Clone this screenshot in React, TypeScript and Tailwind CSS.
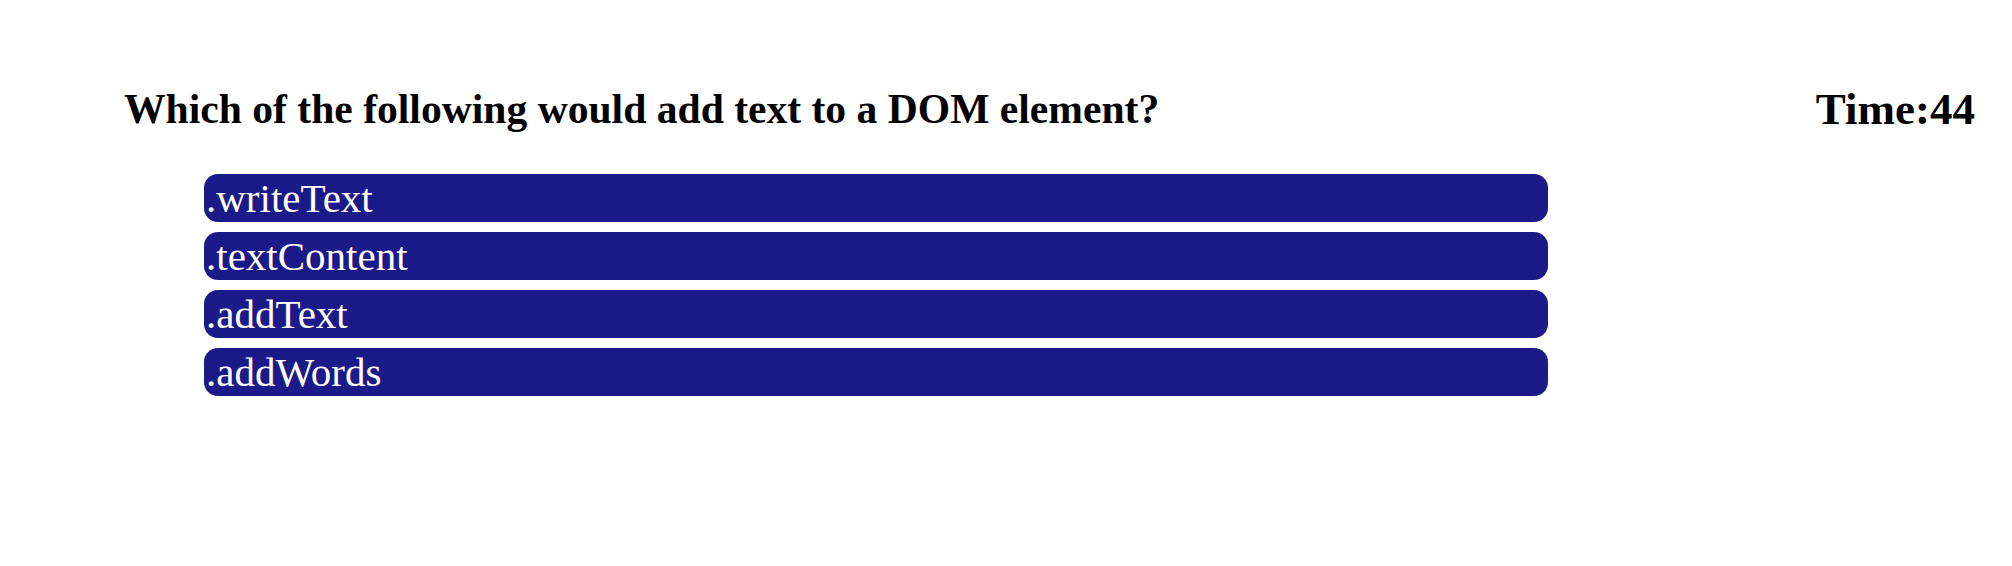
const choices = [".writeText", ".textContent", ".addText", ".addWords"];

const App = () => {
  return (
    <main className="w-full min-h-screen bg-white font-['Liberation_Serif','Times_New_Roman',serif] text-black">
      <div className="flex justify-between items-start pl-[124px] pr-[37px] pt-[84px]">
        <h2 className="text-[41.6px] font-bold leading-[47px] mt-[2px]">
          Which of the following would add text to a DOM element?
        </h2>
        <div className="text-[45px] font-bold leading-[50px]">Time:44</div>
      </div>

      {/* Answer list */}
      <div className="flex flex-col gap-[10px] ml-[204px] mt-[40px] w-[1344px]">
        {choices.map((choice) => (
          <button
            key={choice}
            className="h-[48px] w-full bg-[#1c1a89] text-white text-left text-[41px] leading-[45px] pl-[2px] pt-[1px] rounded-[14px]"
          >
            {choice}
          </button>
        ))}
      </div>
    </main>
  );
};

export default App;
